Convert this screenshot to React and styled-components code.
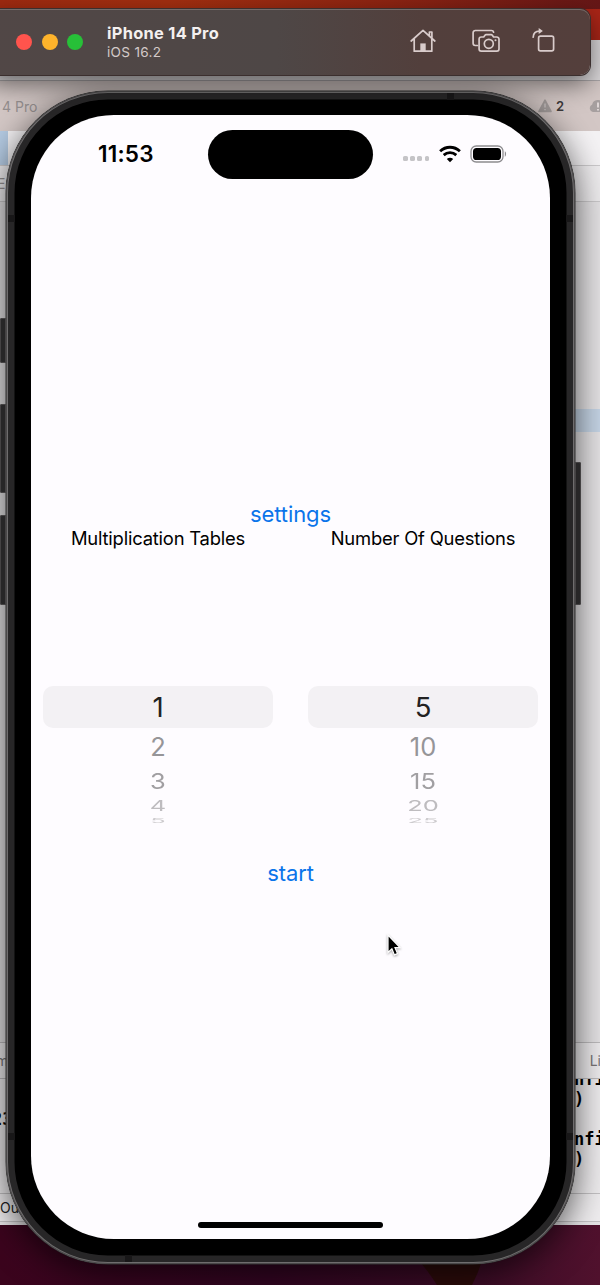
import React from "react";
import styled, { createGlobalStyle } from "styled-components";

const Global = createGlobalStyle`
  * { box-sizing: border-box; }
  body { margin: 0; overflow: hidden; font-family: Inter, "Liberation Sans", sans-serif; }
  button { border: 0; padding: 0; background: none; font: inherit; color: inherit; }
`;

const Desktop = styled.main`
  position: relative;
  width: 600px;
  height: 1285px;
  overflow: hidden;
  background:
    linear-gradient(90deg, #9f2a10 0, #a32f10 28%, #8e2412 65%, #661717 100%) top / 100% 9px no-repeat,
    linear-gradient(#a92517, #a92517) 100% 9px / 60px 60px no-repeat,
    linear-gradient(90deg, #3b041d 0, #330522 45%, #3c0c26 80%, #50112d 100%);
`;

const Wedge = styled.svg`
  position: absolute;
  left: 410px;
  top: 1225px;
`;

/* Code editor behind the simulator */
const EditorWindow = styled.section`
  position: absolute;
  left: -20px;
  top: 40px;
  width: 640px;
  height: 1185px;
  display: flex;
  flex-direction: column;
  background: #e5e3e5;
`;

const EditorBar = styled.div`
  display: flex;
  align-items: center;
  justify-content: space-between;
  flex: none;
  height: ${(p) => p.$h}px;
  padding: 0 ${(p) => p.$right || 0}px 0 ${(p) => p.$left || 0}px;
  background: ${(p) => p.$bg};
  border-bottom: ${(p) => (p.$line ? `1px solid ${p.$line}` : "0")};
  font-size: 14px;
  color: ${(p) => p.$color || "#969090"};
  white-space: nowrap;
`;

const TabMark = styled.span`
  width: 28px;
  height: 100%;
  background: #b5cbe3;
`;

const Warnings = styled.span`
  display: flex;
  align-items: center;
  gap: 4px;
  color: #3c393a;
  font-size: 13px;
  font-weight: 600;
  svg:last-child { margin-left: 20px; }
`;

const Code = styled.div`
  flex: none;
  height: 840px;
  padding-top: 207px;
`;

const CodeHighlight = styled.div`
  height: 23px;
  background: #c6d5e6;
`;

const Console = styled.div`
  display: flex;
  justify-content: space-between;
  flex: none;
  height: 115px;
  overflow: hidden;
  border-bottom: 1px solid #c2c0c2;
  background: #eeecee;
  font: bold 17px/20px "DejaVu Sans Mono", monospace;
  color: #000;
`;

const ConsoleText = styled.pre`
  margin: ${(p) => p.$top}px 0 0;
  padding-left: ${(p) => p.$left || 0}px;
  width: ${(p) => p.$w}px;
  font: inherit;
  overflow: hidden;
`;

/* Simulator title bar */
const Toolbar = styled.header`
  position: absolute;
  left: -12px;
  top: 9px;
  width: 602px;
  height: 66px;
  display: flex;
  align-items: center;
  padding: 0 34px 0 28px;
  border-radius: 10px;
  background: linear-gradient(90deg, #514746 0, #4e4746 48%, #523f3c 72%, #543f3c 100%);
  box-shadow: inset 0 1px 0 #746b69, 0 0 0 1px #3b2f2e, 0 9px 26px rgba(0, 0, 0, 0.55);
`;

const Lights = styled.div`
  display: flex;
  gap: 9.5px;
`;

const Light = styled.i`
  width: 16px;
  height: 16px;
  border-radius: 50%;
  background: ${(p) => p.$c};
`;

const Title = styled.div`
  flex: 1;
  margin: -1px 0 0 24px;
  color: #f4f0ef;
  font-size: 16.4px;
  line-height: 20px;
  font-weight: 700;
  letter-spacing: 0.3px;
`;

const Subtitle = styled.div`
  color: #d3cac8;
  font-size: 13.6px;
  line-height: 18px;
  font-weight: 400;
  letter-spacing: 0.3px;
`;

const Tools = styled.div`
  display: flex;
  align-items: center;
  margin-bottom: 2px;
  color: #d9cccb;
  button { display: flex; }
  button:nth-child(2) { margin: 0 32px 0 36px; }
`;

/* Phone body */
const Phone = styled.section`
  position: absolute;
  left: 6px;
  top: 91px;
  width: 569px;
  height: 1173px;
  padding: 24px 25px 25px;
  border-radius: 102px;
  background: #000;
  box-shadow:
    inset 0 0 0 1px #4a4849,
    inset 0 0 0 2px #6f6d6e,
    inset 0 0 0 8.5px #272627,
    0 0 0 0.5px #333,
    0 8px 34px rgba(0, 0, 0, 0.66);
`;

const SideKey = styled.i`
  position: absolute;
  ${(p) => p.$side}: -6px;
  top: ${(p) => p.$top}px;
  width: 6px;
  height: ${(p) => p.$h}px;
  border-radius: ${(p) => (p.$side === "left" ? "2px 0 0 2px" : "0 2px 2px 0")};
  background: #272627;
  box-shadow: inset 0 0 0 1px #444243;
`;

const Antenna = styled.i`
  position: absolute;
  left: ${(p) => p.$x}px;
  top: ${(p) => p.$y}px;
  width: 7px;
  height: 7px;
  background: #181718;
`;

const Screen = styled.div`
  width: 519px;
  height: 1124px;
  display: flex;
  flex-direction: column;
  align-items: center;
  overflow: hidden;
  border-radius: 83px;
  background: #fefcff;
  color: #000;
`;

const StatusBar = styled.div`
  width: 100%;
  height: 78px;
  flex: none;
  display: grid;
  grid-template-columns: 177px 165px 177px;
  align-items: center;
`;

const Clock = styled.div`
  padding: 0 0 1px 67px;
  font-size: 22.5px;
  font-weight: 600;
  letter-spacing: 0.2px;
`;

const Island = styled.div`
  height: 49px;
  border-radius: 25px;
  background: #000;
`;

const StatusIcons = styled.div`
  display: flex;
  align-items: center;
  padding: 0 0 1px 30px;
`;

const Dots = styled.div`
  display: flex;
  gap: 2.4px;
  margin: 10px 10px 0 0;
  i { width: 4.8px; height: 4.8px; border-radius: 1.6px; background: #c5c4c7; }
`;

const Battery = styled.svg`
  margin-left: 9px;
`;

const Content = styled.div`
  flex: 1;
  width: 100%;
  padding-top: 307px;
  display: flex;
  flex-direction: column;
  align-items: center;
`;

const LinkButton = styled.button`
  color: #0a74ea;
  font-size: 22px;
  line-height: 28px;
  letter-spacing: -0.1px;
`;

const Pickers = styled.div`
  display: flex;
  justify-content: space-between;
  width: 495px;
  margin: -1px 0 34.5px;
`;

const Picker = styled.div`
  width: 230px;
  display: flex;
  flex-direction: column;
  align-items: center;
`;

const Label = styled.div`
  margin-bottom: 136.5px;
  text-align: center;
  font-size: 18.4px;
  line-height: 22px;
  white-space: nowrap;
  letter-spacing: -0.2px;
`;

const Row = styled.div`
  width: 100%;
  height: ${(p) => p.$h}px;
  padding-top: ${(p) => (p.$selected ? 1.5 : 0)}px;
  display: flex;
  align-items: center;
  justify-content: center;
  border-radius: 10px;
  background: ${(p) => (p.$selected ? "#f3f1f4" : "transparent")};
  color: ${(p) => p.$c};
  font-size: ${(p) => (p.$selected ? 27.5 : 25.5)}px;
  line-height: 1;
  span { transform: scaleY(${(p) => p.$squash}); }
`;

const HomeBar = styled.div`
  width: 185px;
  height: 6px;
  flex: none;
  margin-bottom: 11px;
  border-radius: 3px;
  background: #000;
`;

const Cursor = styled.svg`
  position: absolute;
  left: 384px;
  top: 931px;
  filter: drop-shadow(0 1.5px 1.2px rgba(0, 0, 0, 0.35));
`;

const WHEEL = [
  { h: 42, c: "#222", squash: 1 },
  { h: 38, c: "#969598", squash: 1 },
  { h: 30, c: "#a19fa2", squash: 0.84 },
  { h: 21, c: "#bebcbf", squash: 0.58 },
  { h: 8, c: "#cdcbce", squash: 0.25 },
];

function Wheel({ label, values }) {
  return (
    <Picker>
      <Label>{label}</Label>
      {values.map((v, i) => (
        <Row key={v} $h={WHEEL[i].h} $c={WHEEL[i].c} $squash={WHEEL[i].squash} $selected={i === 0}>
          <span>{v}</span>
        </Row>
      ))}
    </Picker>
  );
}

const line = { fill: "none", stroke: "currentColor", strokeWidth: 1.7, strokeLinecap: "round", strokeLinejoin: "round" };

const HomeIcon = () => (
  <svg width="26" height="26" viewBox="0 0 26 26" {...line}>
    <path d="M1.2 13 13 2.4 24.8 13M4.2 11v12.2h17.6V11M19.4 7.7V4h2.5v6" />
    <path d="M10.3 23v-7.6h5.4V23z" fill="currentColor" stroke="none" />
  </svg>
);

const CamerasIcon = () => (
  <svg width="28" height="26" viewBox="0 0 28 26" {...line}>
    <path d="M5.5 17.5H3.3a2.2 2.2 0 0 1-2.2-2.2V4.7a2.2 2.2 0 0 1 2.2-2.2h16.2a2.2 2.2 0 0 1 2.1 1.7" />
    <path d="M9.3 9h2.4l1.3-1.8c.3-.4.7-.6 1.1-.6h5c.5 0 .9.2 1.2.6L21.6 9h3.1A2.2 2.2 0 0 1 27 11.2V21a2.2 2.2 0 0 1-2.2 2.2H9.3A2.2 2.2 0 0 1 7.1 21v-9.8A2.2 2.2 0 0 1 9.3 9z" />
    <circle cx="16.8" cy="15.8" r="4.5" />
    <circle cx="23.5" cy="12.3" r="1" fill="currentColor" stroke="none" />
  </svg>
);

const RotateIcon = () => (
  <svg width="24" height="26" viewBox="0 0 24 26" {...line}>
    <rect x="6.6" y="8.2" width="15" height="14.6" rx="1.8" />
    <path d="M1.2 9.2C1.3 5.6 3.6 3.1 7.6 3.1" />
    <path d="M6.7.1 10.9 3.1 6.7 6.1z" fill="currentColor" stroke="none" />
  </svg>
);

export default function App() {
  return (
    <Desktop>
      <Global />
      <Wedge width="80" height="60" viewBox="0 0 80 60">
        <path d="M0 0h75L74 26C72 38 68 48 62 60H27C20 49 12 38 0 26z" fill="#2c0b0a" />
      </Wedge>

      <EditorWindow>
        <EditorBar $h={41} $bg="#dcd9db" $line="#aaa6a8" />
        <EditorBar $h={50} $bg="#d3c7c5" $left={22} $right={12}>
          <span>4 Pro</span>
          <Warnings>
            <svg width="14" height="14" viewBox="0 0 14 14">
              <path d="M7 1.2 13 12.5H1z" fill="#a39c9b" stroke="#a39c9b" strokeWidth="1.6" strokeLinejoin="round" />
              <path d="M7 4.5v4M7 10v1.2" stroke="#c6bebe" strokeWidth="1.5" />
            </svg>
            2
            <svg width="20" height="14" viewBox="0 0 20 14">
              <path d="M5 13a4 4 0 0 1-.8-7.6A5.8 5.8 0 0 1 15 4.2 4.4 4.4 0 0 1 15.5 13z" fill="#a7a0a0" />
              <path d="M10 3.5v5M10 10v1.5" stroke="#e6dddd" strokeWidth="1.8" />
            </svg>
          </Warnings>
        </EditorBar>
        <EditorBar $h={35} $bg="#f4f2f4" $line="#cbc9cb"><TabMark /></EditorBar>
        <EditorBar $h={36} $bg="#eeecee" $line="#cbc9cb" $left={17}>Ec</EditorBar>
        <Code><CodeHighlight /></Code>
        <EditorBar $h={1} $bg="#bdbbbd" />
        <EditorBar $h={36} $bg="#eeecee" $line="#bdbbbd" $left={16} $right={19} $color="#777577">
          <span>m</span>
          <span>Li</span>
        </EditorBar>
        <Console>
          <ConsoleText $top={30} $left={12} $w={60}>23</ConsoleText>
          <ConsoleText $top={-10} $w={46}>{"nfi\n)\n\nnfi\n)"}</ConsoleText>
        </Console>
        <EditorBar $h={28} $bg="#eeecee" $line="#c2c0c2" $left={20} $color="#222">Ou</EditorBar>
      </EditorWindow>

      <Phone>
        <SideKey $side="left" $top={227} $h={45} />
        <SideKey $side="left" $top={313} $h={89} />
        <SideKey $side="left" $top={424} $h={90} />
        <SideKey $side="right" $top={371} $h={143} />
        <Antenna $x={441} $y={2} />
        <Antenna $x={119} $y={1164} />
        <Antenna $x={2} $y={124} />
        <Antenna $x={560} $y={124} />
        <Antenna $x={2} $y={1042} />
        <Antenna $x={560} $y={1042} />
        <Screen>
          <StatusBar>
            <Clock>11:53</Clock>
            <Island />
            <StatusIcons>
              <Dots><i /><i /><i /><i /></Dots>
              <svg width="22" height="18" viewBox="0 0 22 18" fill="none" stroke="#000" strokeWidth="2.8">
                <path d="M1.1 6.2C6.8.9 15.2.9 20.9 6.2" />
                <path d="M4.7 10.1c3.6-3.3 9-3.3 12.6 0" />
                <path d="M11 17.3 7.8 14c1.8-1.7 4.6-1.7 6.4 0z" fill="#000" stroke="none" />
              </svg>
              <Battery width="37" height="18" viewBox="0 0 37 18">
                <rect x="1" y="1" width="32" height="16" rx="5.2" fill="none" stroke="#8d8c8f" strokeWidth="1.3" />
                <rect x="3" y="3" width="28" height="12" rx="3.6" fill="#000" />
                <path d="M34.8 6.3c1.7.9 1.7 4.5 0 5.4z" fill="#8d8c8f" />
              </Battery>
            </StatusIcons>
          </StatusBar>
          <Content>
            <LinkButton>settings</LinkButton>
            <Pickers>
              <Wheel label="Multiplication Tables" values={[1, 2, 3, 4, 5]} />
              <Wheel label="Number Of Questions" values={[5, 10, 15, 20, 25]} />
            </Pickers>
            <LinkButton>start</LinkButton>
          </Content>
          <HomeBar />
        </Screen>
      </Phone>

      <Toolbar>
        <Lights>
          <Light $c="#ff544d" />
          <Light $c="#feb32b" />
          <Light $c="#27c038" />
        </Lights>
        <Title>
          iPhone 14 Pro
          <Subtitle>iOS 16.2</Subtitle>
        </Title>
        <Tools>
          <button><HomeIcon /></button>
          <button><CamerasIcon /></button>
          <button><RotateIcon /></button>
        </Tools>
      </Toolbar>

      <Cursor width="18" height="28" viewBox="0 0 18 28">
        <path d="M4 4v17.5l3.9-3.7 2.5 6.1 3.1-1.3-2.5-5.9h5z" fill="#000" stroke="#fff" strokeWidth="1.2" />
      </Cursor>
    </Desktop>
  );
}
